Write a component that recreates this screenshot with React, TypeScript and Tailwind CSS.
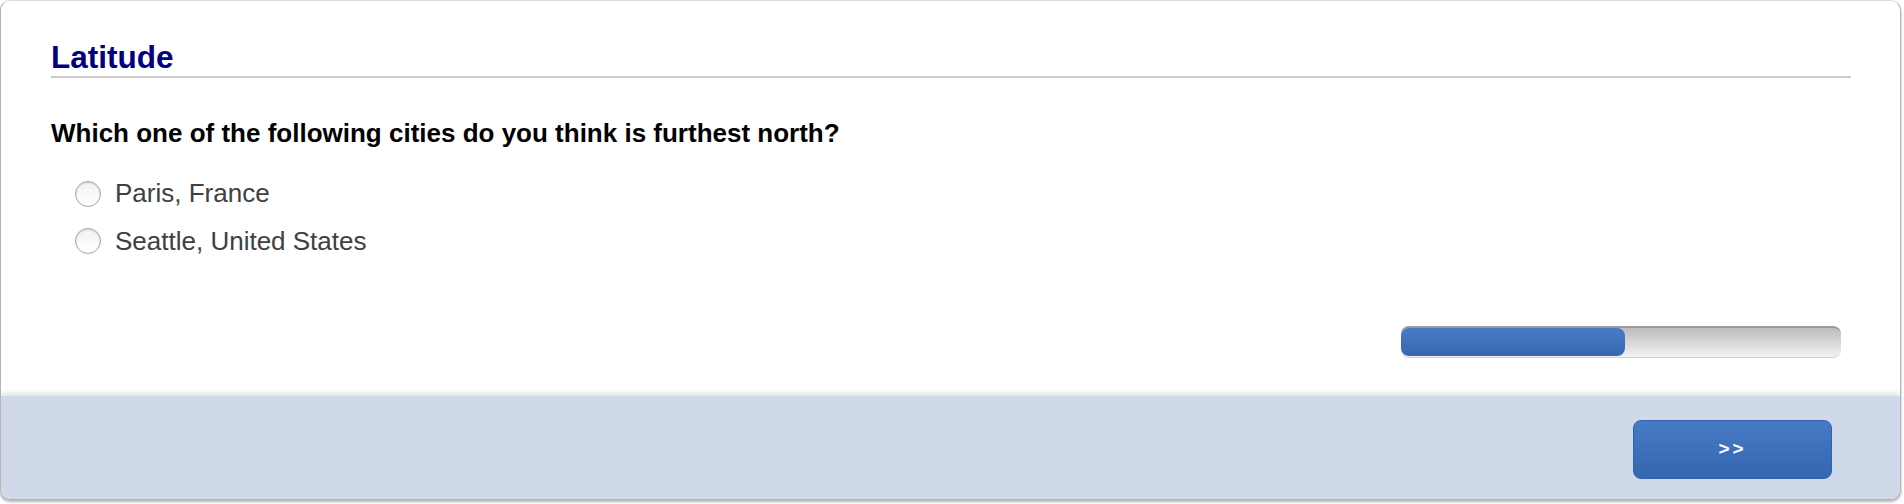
import React from "react";

const font = { fontFamily: '"Liberation Sans", Arial, Helvetica, sans-serif' };

function Radio() {
  return (
    <span className="block w-[26px] h-[26px] rounded-full border border-[#a3a3a3] bg-gradient-to-b from-[#f2f2f2] to-white shadow-[inset_0_1px_2px_rgba(0,0,0,0.12)] shrink-0" />
  );
}

export default function App() {
  const options = ["Paris, France", "Seattle, United States"];
  return (
    <div className="w-[1904px] h-[504px] bg-white" style={font}>
      <div className="w-[1901px] h-[500px] rounded-[10px] border border-[#b4b4b4] border-t-[#dedede] bg-white shadow-[0_2px_3px_rgba(0,0,0,0.3)] overflow-hidden flex flex-col">
        <div className="flex-1 flex flex-col pl-[50px] pr-[49px] pt-[38px]">
          <h1 className="text-[31.5px] leading-[36px] font-bold text-[#000080] border-b-2 border-[#cccccc] pb-[1px]">
            Latitude
          </h1>
          <p className="mt-[40px] text-[26px] leading-[30px] font-bold text-black">
            Which one of the following cities do you think is furthest north?
          </p>
          <div className="mt-[22px] pl-[24px] flex flex-col">
            {options.map((o) => (
              <label key={o} className="h-[47.5px] flex items-center gap-[14px]">
                <Radio />
                <span className="text-[26px] text-[#404040]">{o}</span>
              </label>
            ))}
          </div>
          <div className="mt-auto mb-[39px] flex justify-end pr-[10px]">
            <div className="w-[440px] h-[31px] rounded-[8px] border-t-2 border-[#9a9a9a] bg-gradient-to-b from-[#bdbdbd] to-[#f2f2f2] shadow-[0_1px_0_#cfcfcf] flex items-start">
              <div className="w-[224px] h-[28px] rounded-[8px] bg-gradient-to-b from-[#4a7bc6] to-[#3566b2]" />
            </div>
          </div>
        </div>
        <div className="h-[103px] bg-[#cfd9ea] shadow-[0_-3px_5px_rgba(0,0,0,0.12)] flex justify-end items-start pt-[24px] pr-[68px]">
          <button className="w-[199px] h-[59px] rounded-[8px] border border-[#3263ad] bg-gradient-to-b from-[#467bc5] to-[#3566b0] text-white text-[19px] font-bold tracking-[3px] flex items-center justify-center">
            &gt;&gt;
          </button>
        </div>
      </div>
    </div>
  );
}
